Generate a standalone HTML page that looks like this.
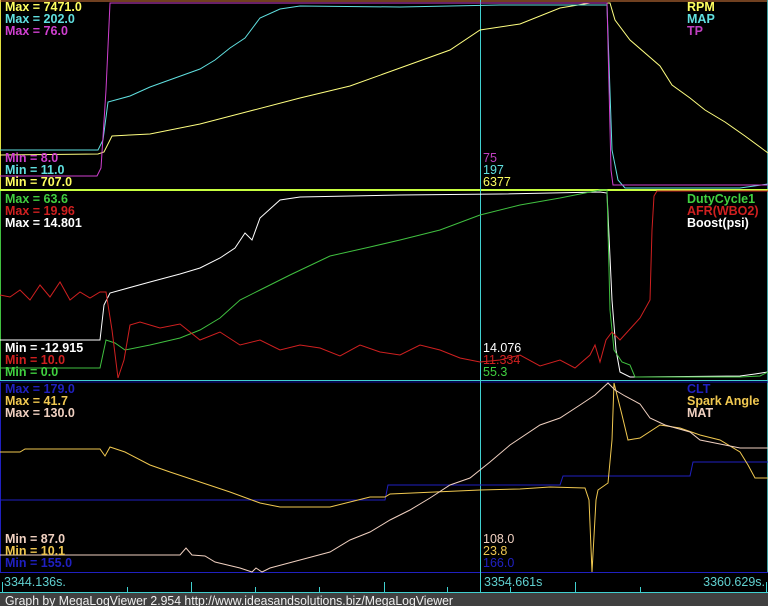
<!DOCTYPE html>
<html><head><meta charset="utf-8"><style>
html,body{margin:0;padding:0;background:#000;width:768px;height:606px;overflow:hidden}
svg{display:block}
text{font-family:"Liberation Sans",Arial,sans-serif;font-size:12.5px}
.b{font-weight:bold}
</style></head><body>
<svg width="768" height="606" viewBox="0 0 768 606" xmlns="http://www.w3.org/2000/svg">
<rect width="768" height="606" fill="#000"/>
<line x1="0.5" y1="0" x2="0.5" y2="190" stroke="#e0e040"/>
<line x1="0" y1="1" x2="768" y2="1" stroke="#e08040"/>
<line x1="0.5" y1="191" x2="0.5" y2="381" stroke="#40c040"/>
<line x1="0.5" y1="382" x2="0.5" y2="572" stroke="#2020c0"/>
<line x1="767.5" y1="0" x2="767.5" y2="572" stroke="#40a0a0"/>
<line x1="0" y1="190" x2="768" y2="190" stroke="#c8ff40" stroke-width="2"/>
<line x1="0" y1="380.5" x2="768" y2="380.5" stroke="#40d0d0"/>
<line x1="0" y1="382" x2="768" y2="382" stroke="#1010a0"/>
<line x1="0" y1="572.5" x2="768" y2="572.5" stroke="#2020c0"/>
<line x1="0" y1="592.5" x2="768" y2="592.5" stroke="#40d0d0"/>
<line x1="480.5" y1="0" x2="480.5" y2="592" stroke="#40d0d0"/>
<g fill="none" stroke-width="1">
<polyline stroke="#ffff80" points="0,155 98,154 104,152 112,136 130,135 150,134 200,124 250,111 300,98 350,86 400,68 450,50 480,30 520,24 560,8 590,3 610,3 615,20 630,40 660,66 672,85 690,98 705,110 725,122 745,136 768,153"/>
<polyline stroke="#60e0e0" points="0,150 98,150 103,140 108,102 130,96 150,87 175,78 200,69 215,60 230,48 245,38 260,18 280,9 300,6 400,7 500,5 600,5 607,5 612,150 618,180 625,188 740,188 768,184"/>
<polyline stroke="#d040d0" points="0,176 97,176 101,168 106,90 110,3 607,3 611,170 613,185 768,185"/>
<polyline stroke="#ffffff" points="0,340 100,340 104,305 110,293 150,282 180,274 200,268 220,258 235,248 245,233 252,240 260,218 280,200 300,197 400,195 500,194 600,192 607,193 612,300 616,350 620,372 630,377 740,376 755,374 768,372"/>
<polyline stroke="#40c040" points="0,368 100,368 106,340 115,343 125,350 150,345 180,338 200,330 220,318 240,300 260,290 290,275 330,256 370,247 400,240 440,230 480,215 520,205 560,198 600,190 607,190 610,310 614,350 622,362 630,365 635,377 740,377 760,376 768,372"/>
<polyline stroke="#d02020" points="0,295 10,297 20,290 30,300 40,285 50,297 60,282 70,300 80,292 90,298 100,292 106,292 112,330 118,378 124,360 130,325 140,322 160,328 180,324 200,340 220,332 240,345 260,340 280,350 300,345 320,348 340,356 360,345 380,352 400,355 420,345 440,350 460,358 480,362 500,360 520,355 540,366 560,360 575,368 590,355 595,345 600,362 606,340 612,332 620,340 640,318 650,300 652,230 654,196 657,191 768,191"/>
<polyline stroke="#2020c0" points="0,500 385,500 388,485 560,485 563,476 690,476 693,462 768,462"/>
<polyline stroke="#f0c850" points="0,452 20,452 25,449 100,449 105,456 110,447 125,452 150,465 170,472 200,482 230,492 260,503 280,507 300,507 330,507 370,497 385,497 390,494 480,490 520,489 550,487 585,488 589,500 592,572 596,500 598,490 608,483 612,440 614,383 622,415 628,440 640,438 660,425 680,428 700,435 720,440 740,452 748,465 755,478 768,478"/>
<polyline stroke="#f0d0c0" points="0,555 180,555 186,548 192,555 205,556 215,562 240,568 252,572 256,568 262,572 270,568 300,560 330,552 350,540 370,532 390,520 410,510 430,498 450,485 470,478 490,462 510,445 540,425 560,418 580,405 595,395 608,383 615,390 625,396 640,404 650,418 665,425 690,432 700,440 720,444 740,448 768,448"/>
</g>
<g stroke="#40d0d0">
<line x1="2.5" y1="582" x2="2.5" y2="592"/>
<line x1="127.5" y1="587" x2="127.5" y2="592"/>
<line x1="191.5" y1="582" x2="191.5" y2="592"/>
<line x1="255.5" y1="587" x2="255.5" y2="592"/>
<line x1="319.5" y1="587" x2="319.5" y2="592"/>
<line x1="384.5" y1="582" x2="384.5" y2="592"/>
<line x1="447.5" y1="587" x2="447.5" y2="592"/>
<line x1="510.5" y1="587" x2="510.5" y2="592"/>
<line x1="575.5" y1="582" x2="575.5" y2="592"/>
<line x1="640.5" y1="587" x2="640.5" y2="592"/>
<line x1="766.5" y1="582" x2="766.5" y2="592"/>
</g>
<g class="b">
<text x="5" y="11" fill="#ffff60">Max = 7471.0</text>
<text x="5" y="23" fill="#60e0e0">Max = 202.0</text>
<text x="5" y="35" fill="#d040d0">Max = 76.0</text>
<text x="5" y="162" fill="#d040d0">Min = 8.0</text>
<text x="5" y="174" fill="#60e0e0">Min = 11.0</text>
<text x="5" y="186" fill="#ffff60">Min = 707.0</text>
<text x="687" y="11" fill="#ffff60">RPM</text>
<text x="687" y="23" fill="#60e0e0">MAP</text>
<text x="687" y="35" fill="#c040c0">TP</text>
<text x="5" y="203" fill="#40d040">Max = 63.6</text>
<text x="5" y="215" fill="#d02020">Max = 19.96</text>
<text x="5" y="227" fill="#ffffff">Max = 14.801</text>
<text x="5" y="352" fill="#ffffff">Min = -12.915</text>
<text x="5" y="364" fill="#d02020">Min = 10.0</text>
<text x="5" y="376" fill="#40d040">Min = 0.0</text>
<text x="687" y="203" fill="#40d040">DutyCycle1</text>
<text x="687" y="215" fill="#d02020">AFR(WBO2)</text>
<text x="687" y="227" fill="#ffffff">Boost(psi)</text>
<text x="5" y="393" fill="#2020c0">Max = 179.0</text>
<text x="5" y="405" fill="#f0c850">Max = 41.7</text>
<text x="5" y="417" fill="#f0d0c0">Max = 130.0</text>
<text x="5" y="543" fill="#f0d0c0">Min = 87.0</text>
<text x="5" y="555" fill="#f0c850">Min = 10.1</text>
<text x="5" y="567" fill="#2020c0">Min = 155.0</text>
<text x="687" y="393" fill="#2020c0">CLT</text>
<text x="687" y="405" fill="#f0c850">Spark Angle</text>
<text x="687" y="417" fill="#f0d0c0">MAT</text>
</g>
<text x="483" y="162" fill="#c040c0">75</text>
<text x="483" y="174" fill="#60e0e0">197</text>
<text x="483" y="186" fill="#ffff60">6377</text>
<text x="483" y="352" fill="#ffffff">14.076</text>
<text x="483" y="364" fill="#d02020">11.334</text>
<text x="483" y="376" fill="#40d040">55.3</text>
<text x="483" y="543" fill="#f0d0c0">108.0</text>
<text x="483" y="555" fill="#f0c850">23.8</text>
<text x="483" y="567" fill="#2020c0">166.0</text>
<text x="4" y="586" fill="#60d0d0">3344.136s.</text>
<text x="484" y="586" fill="#60d0d0">3354.661s</text>
<text x="765" y="586" fill="#60d0d0" text-anchor="end">3360.629s.</text>
<rect x="0" y="593" width="768" height="13" fill="#404040"/>
<text x="5" y="605" fill="#f0f0f0" textLength="448" lengthAdjust="spacingAndGlyphs">Graph by MegaLogViewer 2.954 http://www.ideasandsolutions.biz/MegaLogViewer</text>
</svg>
</body></html>
